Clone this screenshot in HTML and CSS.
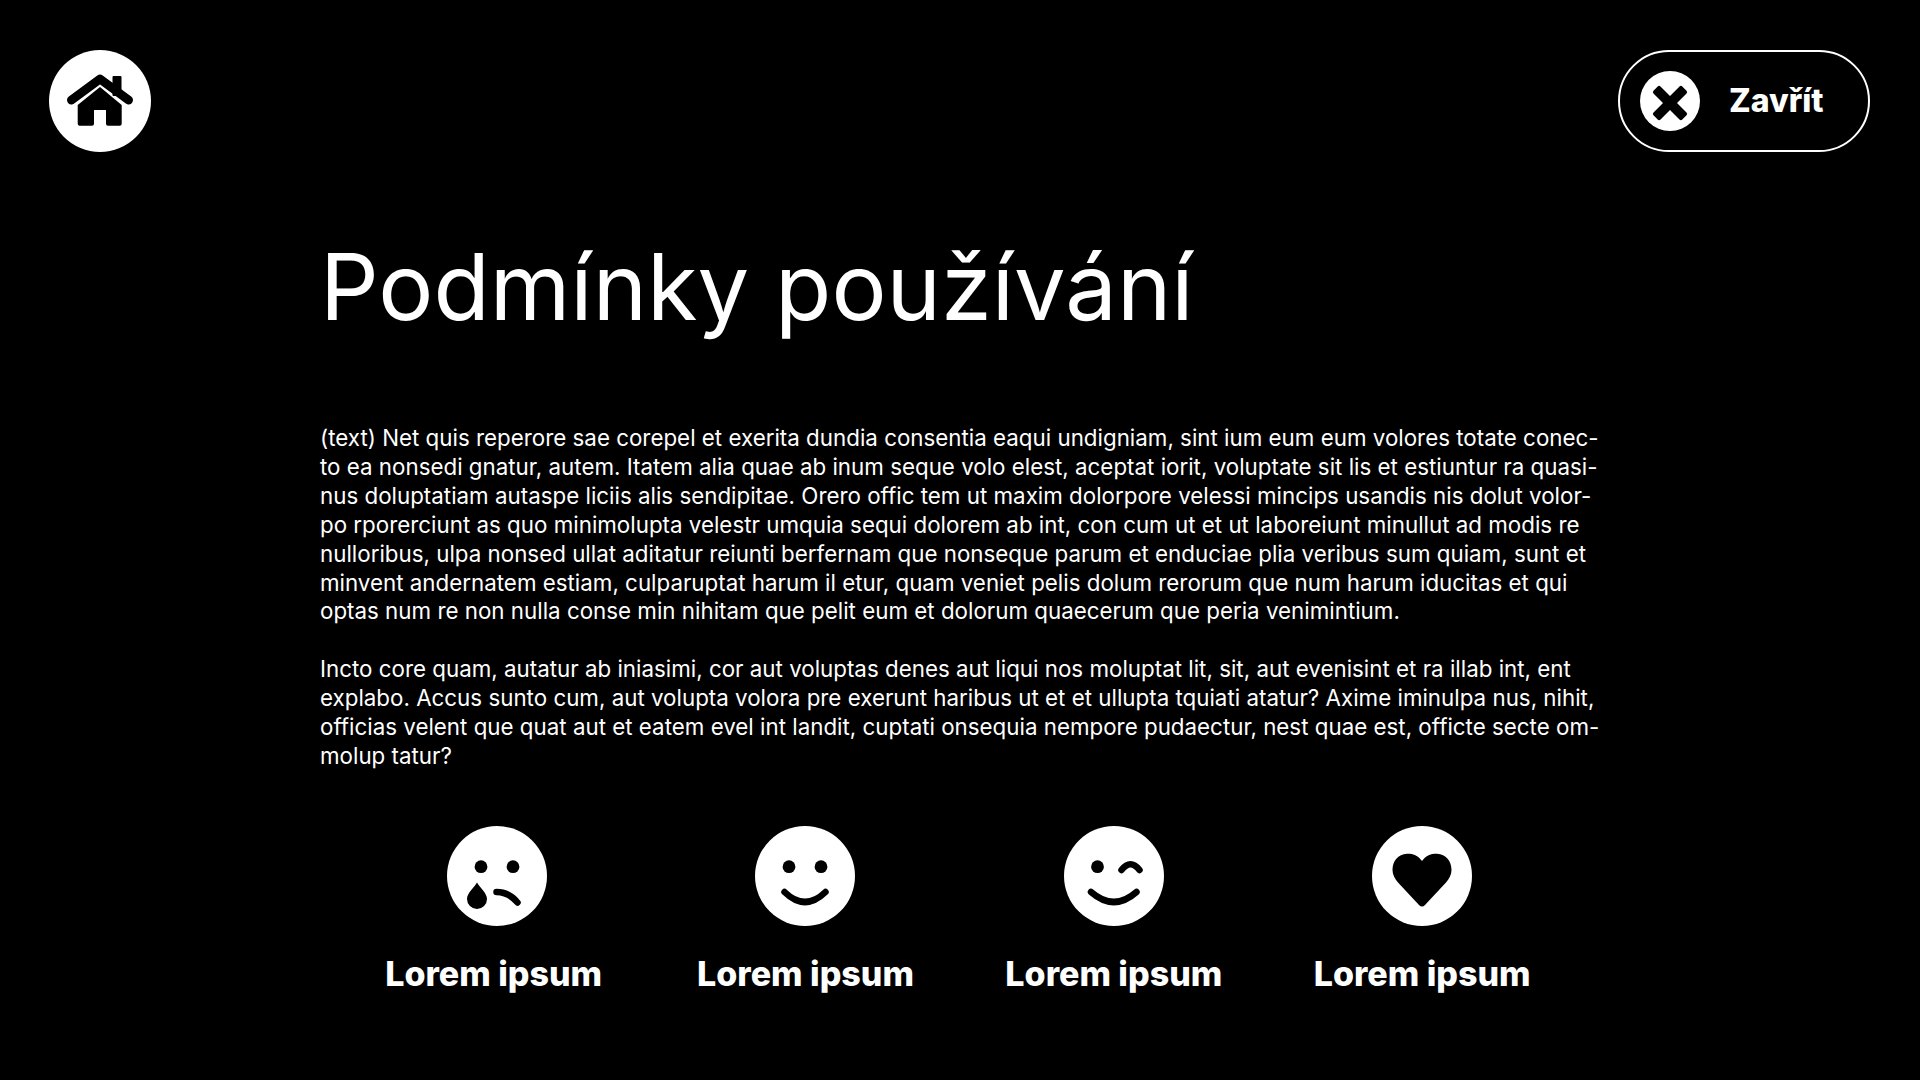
FILE: index.html
```html
<!DOCTYPE html>
<html lang="cs">
<head>
<meta charset="utf-8">
<title>Podmínky používání</title>
<link rel="stylesheet" href="styles.css">
</head>
<body>
<header class="top">
    <a class="home" href="#">
        <svg viewBox="0 0 102 102" width="102" height="102">
            <rect x="63.5" y="26" width="9" height="20" rx="1" fill="#000"/>
            <path d="M22.5 50 L51 29 L79.500 50" fill="none" stroke="#000" stroke-width="9" stroke-linecap="round" stroke-linejoin="round"/>
            <path d="M51 37 L72.700 55 V73.700 a2 2 0 0 1 -2 2 H59 a2 2 0 0 1 -2 -2 V60 H45 V73.700 a2 2 0 0 1 -2 2 H30.700 a2 2 0 0 1 -2 -2 V55 Z" fill="#000"/>
        </svg>
    </a>
    <a class="close" href="#">
        <svg viewBox="0 0 60 60" width="60" height="60">
            <circle cx="30" cy="30" r="30" fill="#fff"/>
            <path d="M20.500 15.500 L30 25 L39.500 15.500 a2 2 0 0 1 2.800 0 L46.500 19.700 a2 2 0 0 1 0 2.800 L37 32 L46.500 41.500 a2 2 0 0 1 0 2.800 L42.300 48.500 a2 2 0 0 1 -2.800 0 L30 39 L20.500 48.500 a2 2 0 0 1 -2.800 0 L13.500 44.300 a2 2 0 0 1 0 -2.800 L23 32 L13.500 22.500 a2 2 0 0 1 0 -2.800 L17.700 15.500 a2 2 0 0 1 2.800 0 Z" fill="#000"/>
        </svg>
        <span>Zavřít</span>
    </a>
</header>
<main class="content">
    <h1>Podmínky používání</h1>
    <p>(text) Net quis reperore sae corepel et exerita dundia consentia eaqui undigniam, sint ium eum eum volores totate conec-<br>
    to ea nonsedi gnatur, autem. Itatem alia quae ab inum seque volo elest, aceptat iorit, voluptate sit lis et estiuntur ra quasi-<br>
    nus doluptatiam autaspe liciis alis sendipitae. Orero offic tem ut maxim dolorpore velessi mincips usandis nis dolut volor-<br>
    po rporerciunt as quo minimolupta velestr umquia sequi dolorem ab int, con cum ut et ut laboreiunt minullut ad modis re<br>
    nulloribus, ulpa nonsed ullat aditatur reiunti berfernam que nonseque parum et enduciae plia veribus sum quiam, sunt et<br>
    minvent andernatem estiam, culparuptat harum il etur, quam veniet pelis dolum rerorum que num harum iducitas et qui<br>
    optas num re non nulla conse min nihitam que pelit eum et dolorum quaecerum que peria venimintium.</p>
    <p>Incto core quam, autatur ab iniasimi, cor aut voluptas denes aut liqui nos moluptat lit, sit, aut evenisint et ra illab int, ent<br>
    explabo. Accus sunto cum, aut volupta volora pre exerunt haribus ut et et ullupta tquiati atatur? Axime iminulpa nus, nihit,<br>
    officias velent que quat aut et eatem evel int landit, cuptati onsequia nempore pudaectur, nest quae est, officte secte om-<br>
    molup tatur?</p>
    <ul class="reactions">
        <li>
            <svg viewBox="0 0 100 100" width="100" height="100">
                <circle cx="50" cy="50" r="50" fill="#fff"/>
                <circle cx="34" cy="40.700" r="6.400"/>
                <circle cx="66" cy="40.700" r="6.400"/>
                <path d="M30 56.500 C33 62 40 67 40 73 A10 10 0 0 1 20 73 C20 67 27 62 30 56.500 Z"/>
                <path class="line" d="M49.500 66 C58 66 65 70 70.500 76.500"/>
            </svg>
            <span class="first">Lorem ipsum</span>
        </li>
        <li>
            <svg viewBox="0 0 100 100" width="100" height="100">
                <circle cx="50" cy="50" r="50" fill="#fff"/>
                <circle cx="34" cy="40.700" r="6.400"/>
                <circle cx="66" cy="40.700" r="6.400"/>
                <path class="line" d="M29.500 66 Q50 86 70.500 66"/>
            </svg>
            <span>Lorem ipsum</span>
        </li>
        <li>
            <svg viewBox="0 0 100 100" width="100" height="100">
                <circle cx="50" cy="50" r="50" fill="#fff"/>
                <circle cx="33.500" cy="40.700" r="6.400"/>
                <path class="line" d="M57.500 44 Q66.500 32.500 75.500 44"/>
                <path class="line" d="M27 66 Q50 86 72.500 66"/>
            </svg>
            <span>Lorem ipsum</span>
        </li>
        <li>
            <svg viewBox="0 0 100 100" width="100" height="100">
                <circle cx="50" cy="50" r="50" fill="#fff"/>
                <path d="M50 35 C54 29 60 27.500 65 27.700 C74 28 79.500 35 79.500 44 C79.500 49 77 53 74 56.500 L53 79 C51 81 49 81 47 79 L26 56.500 C23 53 20.500 49 20.500 44 C20.500 35 26 28 35 27.700 C40 27.500 46 29 50 35 Z"/>
            </svg>
            <span>Lorem ipsum</span>
        </li>
    </ul>
</main>
</body>
</html>
```

FILE: styles.css
```css
*{
    margin: 0;
    padding: 0;
    box-sizing: border-box;
}
html, body{
    height: 100%;
}
body{
    background-color: #000;
    color: #fff;
    font-family: "Inter", "Liberation Sans", sans-serif;
    overflow: hidden;
}
a{
    color: inherit;
    text-decoration: none;
}
.top{
    display: flex;
    justify-content: space-between;
    padding: 50px 50px 0 49px;
}
.home{
    display: block;
    width: 102px;
    height: 102px;
    border-radius: 50%;
    background-color: #fff;
}
.home svg, .close svg, .reactions svg{
    display: block;
}
.close{
    display: flex;
    align-items: center;
    width: 252px;
    height: 102px;
    padding-left: 20px;
    border: 2px solid #fff;
    border-radius: 51px;
}
.close span{
    margin: -2px 0 0 29px;
    font-size: 32px;
    font-weight: 800;
}
.content{
    padding: 80px 0 0 320px;
}
h1{
    font-size: 92px;
    font-weight: 400;
    line-height: 110px;
    margin-bottom: 82px;
}
p{
    font-size: 22.350px;
    line-height: 28.900px;
    margin-bottom: 28.500px;
}
.reactions{
    display: grid;
    grid-template-columns: repeat(4, 308.330px);
    width: 1234px;
    margin: 55.500px 0 0 23px;
    list-style: none;
}
.reactions li{
    display: flex;
    flex-direction: column;
    align-items: center;
    gap: 27px;
}
.reactions svg circle, .reactions svg path{
    fill: #000;
}
.reactions svg circle:first-child{
    fill: #fff;
}
.reactions svg .line{
    fill: none;
    stroke: #000;
    stroke-width: 6.500;
    stroke-linecap: round;
    stroke-linejoin: round;
}
.reactions span{
    font-size: 34px;
    font-weight: 800;
    line-height: 42px;
}
.reactions .first{
    margin-left: -7px;
}
```
